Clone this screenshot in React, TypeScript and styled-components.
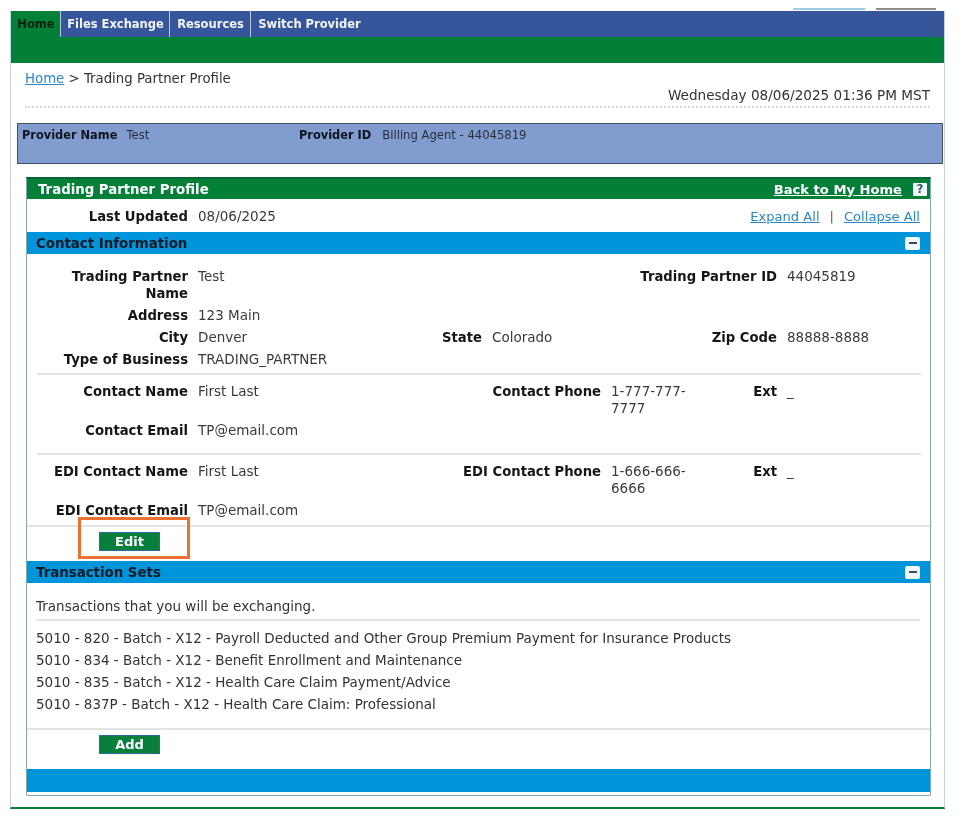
import React from "react"
import styled, { createGlobalStyle } from "styled-components"

const GlobalStyle = createGlobalStyle`
  html, body {
    margin: 0;
    padding: 0;
    background: #fff;
  }
  body {
    font-family: "DejaVu Sans", Verdana, sans-serif;
    font-size: 13.5px;
    line-height: 17px;
    color: #333;
  }
`

const Page = styled.div`
  width: 961px;
  height: 816px;
  overflow: hidden;
  filter: blur(0.35px);
`

const TopStrip = styled.div`
  height: 11px;
  margin: 0 16px 0 10px;
  display: flex;
  justify-content: flex-end;
  align-items: flex-end;
  gap: 11px;
  padding-right: 9px;
`

const TopStub = styled.span<{ $w: number; $c: string }>`
  width: ${p => p.$w}px;
  height: 2px;
  margin-bottom: 1px;
  background: ${p => p.$c};
`

const Frame = styled.div`
  width: 935px;
  height: 798px;
  margin-left: 10px;
  box-sizing: border-box;
  border-left: 1.5px solid #c5d0ee;
  border-right: 1.5px solid #c5d0ee;
  border-bottom: 2px solid #0b7d3a;
`

const NavBar = styled.div`
  height: 26px;
  background: #35569a;
  display: flex;
`

const Tab = styled.a<{ $active?: boolean; $last?: boolean; $w: number }>`
  width: ${p => p.$w}px;
  box-sizing: border-box;
  padding: 1px 0 0 1px;
  display: flex;
  align-items: center;
  justify-content: center;
  font-size: 11.5px;
  font-weight: 700;
  color: ${p => (p.$active ? "#06210f" : "#f2f5fb")};
  background: ${p => (p.$active ? "#028037" : "transparent")};
  border-right: ${p => (p.$last ? "0" : "1px solid #b9c6e2")};
`

const SubBar = styled.div`
  height: 26px;
  background: #028037;
`

const Crumbs = styled.div`
  padding: 7px 14px 0 14px;
  height: 24px;
  box-sizing: border-box;
  font-size: 13.3px;
  color: #333;
`

const Link = styled.a`
  color: #2b87c4;
  text-decoration: underline;
`

const DateLine = styled.div`
  margin: 0 14px;
  height: 21px;
  box-sizing: border-box;
  font-size: 13.6px;
  text-align: right;
  border-bottom: 2px dotted #d8d8d8;
`

const ProviderBar = styled.div`
  margin: 15px 1px 0 6px;
  height: 41px;
  box-sizing: border-box;
  background: #819dcf;
  border: 1.5px solid #3e4f66;
  padding: 3px 0 0 4px;
  display: flex;
  font-size: 11.6px;
`

const ProviderGroup = styled.div<{ $w?: number; $gap: number }>`
  width: ${p => (p.$w ? `${p.$w}px` : "auto")};
  display: flex;
  gap: ${p => p.$gap}px;
  color: #2a2f3a;
  b {
    font-size: 11.4px;
    color: #10141c;
  }
`

const Card = styled.div`
  margin: 13px 13px 0 15px;
  height: 619px;
  box-sizing: border-box;
  border: 1.5px solid #7fa9b5;
  border-top: 2px solid #05633a;
  border-radius: 0 0 2px 2px;
`

const TitleBar = styled.div`
  height: 20px;
  background: #028037;
  color: #fff;
  font-size: 13.3px;
  font-weight: 700;
  display: flex;
  align-items: center;
  justify-content: space-between;
  padding: 0 3px 0 11px;
`

const TitleRight = styled.div`
  display: flex;
  align-items: center;
  gap: 11px;
  font-size: 13.1px;
  a {
    color: #fff;
    text-decoration: underline;
  }
`

const HelpBox = styled.span`
  width: 14px;
  height: 13px;
  background: #f4f7f5;
  color: #2c5d6e;
  font-size: 12px;
  line-height: 13px;
  font-weight: 700;
  text-align: center;
  border-radius: 1px;
`

const UpdatedRow = styled.div`
  height: 33px;
  padding: 9px 10px 0 0;
  box-sizing: border-box;
  display: flex;
  justify-content: space-between;
`

const Pair = styled.div`
  display: grid;
  grid-template-columns: 161px auto;
  column-gap: 10px;
`

const Label = styled.div`
  font-size: 13.2px;
  font-weight: 700;
  color: #14171a;
  text-align: right;
`

const Value = styled.div<{ $wide?: boolean }>`
  color: #3a3a3a;
  grid-column: ${p => (p.$wide ? "2 / -1" : "auto")};
`

const LinkGroup = styled.div`
  display: flex;
  gap: 10px;
  font-size: 13.1px;
  span {
    color: #7a5a3c;
  }
`

const SectionBar = styled.div`
  height: 22px;
  background: #0095db;
  color: #0b1a24;
  font-size: 13.35px;
  font-weight: 700;
  display: flex;
  align-items: center;
  justify-content: space-between;
  padding: 0 10px 0 9px;
`

const MinusBox = styled.span`
  width: 15px;
  height: 13px;
  background: #f4f8fb;
  border-radius: 2px;
  display: flex;
  align-items: center;
  justify-content: center;
  &::after {
    content: "";
    width: 8px;
    height: 2px;
    background: #34505f;
  }
`

const FieldGrid = styled.div<{ $cols: string; $top: number; $bottom: number }>`
  display: grid;
  grid-template-columns: ${p => p.$cols};
  column-gap: 10px;
  row-gap: 5px;
  padding: ${p => p.$top}px 0 ${p => p.$bottom}px 0;
`

const Rule = styled.div<{ $full?: boolean }>`
  height: 2px;
  background: #e4e4e4;
  margin: ${p => (p.$full ? "0" : "0 9px 0 10px")};
`

const ButtonRow = styled.div<{ $h: number; $top: number }>`
  position: relative;
  height: ${p => p.$h}px;
  padding: ${p => p.$top}px 0 0 72px;
  box-sizing: border-box;
`

const ActionButton = styled.button`
  display: block;
  width: 61px;
  height: 19px;
  padding: 0;
  border: 1px solid #2c6b9e;
  background: #0a7f3b;
  color: #fff;
  font-family: inherit;
  font-size: 13px;
  line-height: 15px;
  font-weight: 700;
`

const Highlight = styled.div`
  position: absolute;
  left: 51px;
  top: -10px;
  width: 112px;
  height: 42px;
  box-sizing: border-box;
  border: 3px solid #ed7032;
`

const TransactionBody = styled.div`
  padding: 15px 10px 0 9px;
`

const Intro = styled.div`
  height: 21px;
`

const TransactionList = styled.ul`
  list-style: none;
  margin: 0;
  padding: 9px 0 0 0;
  height: 107px;
  box-sizing: border-box;
`

const TransactionItem = styled.li`
  height: 22px;
  line-height: 17px;
`

const FooterBar = styled.div`
  height: 23px;
  margin-top: 15px;
  background: #0095db;
`

const rowCols1 = "161px 132px 142px 118px 157px 1fr"
const rowCols2 = "161px 202px 191px 80px 76px 1fr"

const transactions = [
  "5010 - 820 - Batch - X12 - Payroll Deducted and Other Group Premium Payment for Insurance Products",
  "5010 - 834 - Batch - X12 - Benefit Enrollment and Maintenance",
  "5010 - 835 - Batch - X12 - Health Care Claim Payment/Advice",
  "5010 - 837P - Batch - X12 - Health Care Claim: Professional",
]

const ContactBlock = ({ prefix, phone, bottom }: { prefix: string; phone: string; bottom: number }) => (
  <FieldGrid $cols={rowCols2} $top={8} $bottom={bottom}>
    <Label>{prefix}Contact Name</Label>
    <Value>First Last</Value>
    <Label>{prefix}Contact Phone</Label>
    <Value>{phone}</Value>
    <Label>Ext</Label>
    <Value>_</Value>
    <Label>{prefix}Contact Email</Label>
    <Value>TP@email.com</Value>
  </FieldGrid>
)

export default function App() {
  return (
    <Page>
      <GlobalStyle />
      <TopStrip>
        <TopStub $w={72} $c="#9ccbea" />
        <TopStub $w={60} $c="#8d8d8d" />
      </TopStrip>
      <Frame>
        <NavBar>
          <Tab $active $w={50}>Home</Tab>
          <Tab $w={109}>Files Exchange</Tab>
          <Tab $w={81}>Resources</Tab>
          <Tab $last $w={116}>Switch Provider</Tab>
        </NavBar>
        <SubBar />
        <Crumbs>
          <Link>Home</Link> &gt; Trading Partner Profile
        </Crumbs>
        <DateLine>Wednesday 08/06/2025 01:36 PM MST</DateLine>
        <ProviderBar>
          <ProviderGroup $w={277} $gap={9}>
            <b>Provider Name</b> Test
          </ProviderGroup>
          <ProviderGroup $gap={11}>
            <b>Provider ID</b> Billing Agent - 44045819
          </ProviderGroup>
        </ProviderBar>
        <Card>
          <TitleBar>
            Trading Partner Profile
            <TitleRight>
              <a>Back to My Home</a>
              <HelpBox>?</HelpBox>
            </TitleRight>
          </TitleBar>
          <UpdatedRow>
            <Pair>
              <Label>Last Updated</Label>
              <Value>08/06/2025</Value>
            </Pair>
            <LinkGroup>
              <Link>Expand All</Link>
              <span>|</span>
              <Link>Collapse All</Link>
            </LinkGroup>
          </UpdatedRow>
          <SectionBar>
            Contact Information
            <MinusBox />
          </SectionBar>
          <FieldGrid $cols={rowCols1} $top={14} $bottom={5}>
            <Label>Trading Partner<br />Name</Label>
            <Value>Test</Value>
            <div />
            <div />
            <Label>Trading Partner ID</Label>
            <Value>44045819</Value>
            <Label>Address</Label>
            <Value $wide>123 Main</Value>
            <Label>City</Label>
            <Value>Denver</Value>
            <Label>State</Label>
            <Value>Colorado</Value>
            <Label>Zip Code</Label>
            <Value>88888-8888</Value>
            <Label>Type of Business</Label>
            <Value $wide>TRADING_PARTNER</Value>
          </FieldGrid>
          <Rule />
          <ContactBlock prefix="" phone="1-777-777-7777" bottom={14} />
          <Rule />
          <ContactBlock prefix="EDI " phone="1-666-666-6666" bottom={6} />
          <Rule $full />
          <ButtonRow $h={34} $top={5}>
            <ActionButton>Edit</ActionButton>
            <Highlight />
          </ButtonRow>
          <SectionBar>
            Transaction Sets
            <MinusBox />
          </SectionBar>
          <TransactionBody>
            <Intro>Transactions that you will be exchanging.</Intro>
            <Rule $full />
            <TransactionList>
              {transactions.map(t => (
                <TransactionItem key={t}>{t}</TransactionItem>
              ))}
            </TransactionList>
          </TransactionBody>
          <Rule $full />
          <ButtonRow $h={24} $top={5}>
            <ActionButton>Add</ActionButton>
          </ButtonRow>
          <FooterBar />
        </Card>
      </Frame>
    </Page>
  )
}
